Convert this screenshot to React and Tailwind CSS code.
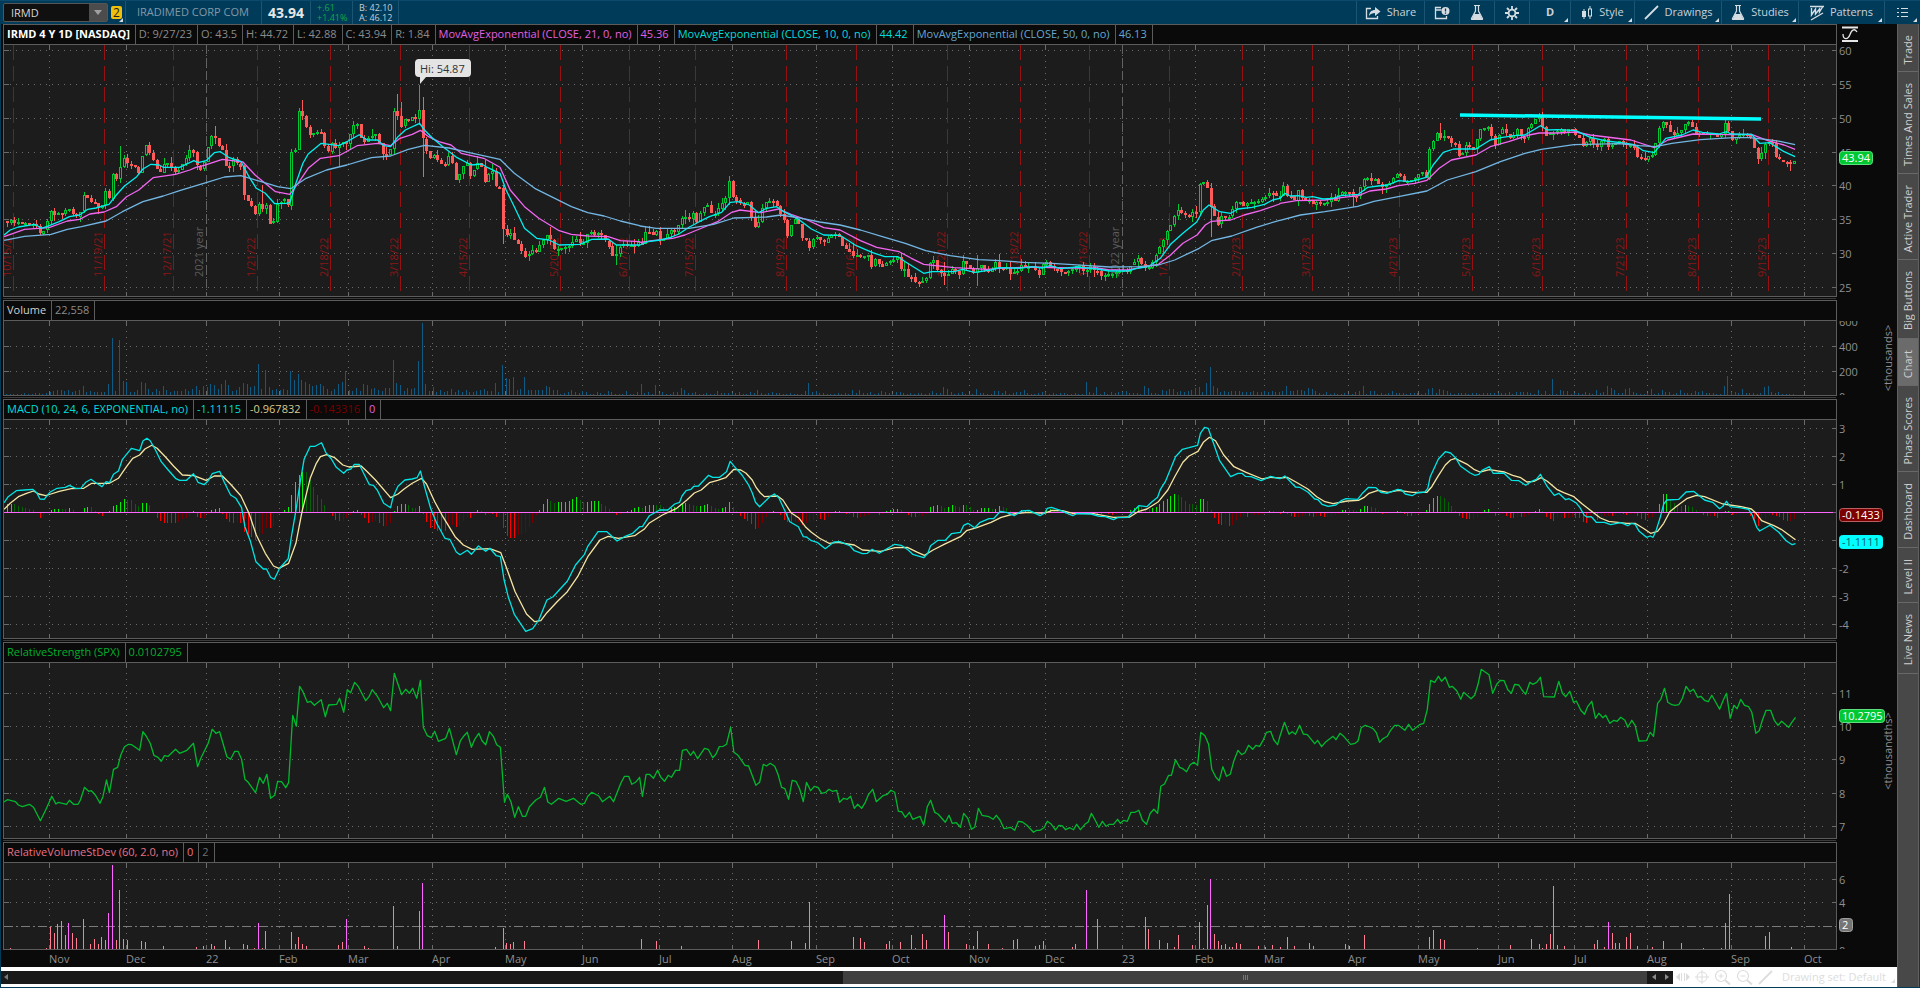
import React from "react";

/* ---------- data helpers ---------- */

// Samples are "x,y" pairs on a fine grid (2.45 units per px across, 3 per px down),
// relative to the origin of their segment.
const trace = (originX, originY, samples) =>
  samples
    .trim()
    .split(/\s+/)
    .map((pair) => {
      const [a, b] = pair.split(",").map(Number);
      return [originX + a / 2.45, originY + b / 3];
    });

const pathOf = (points) => "M" + points.map(([x, y]) => `${x.toFixed(1)} ${y.toFixed(1)}`).join("L");

const valueAt = (points, x) => {
  for (let i = 1; i < points.length; i++) {
    if (points[i][0] >= x) {
      const [x0, y0] = points[i - 1];
      const [x1, y1] = points[i];
      return x1 === x0 ? y1 : y0 + ((y1 - y0) * (x - x0)) / (x1 - x0);
    }
  }
  return points[points.length - 1][1];
};

const noise = (i, salt) => {
  const v = Math.sin(i * 127.1 + salt * 311.7) * 43758.5453;
  return v - Math.floor(v);
};

const STEP = 3.647;
const BAR_COUNT = 491;
const barX = (i) => Math.round(7 + i * STEP);

/* ---------- price ---------- */

const closes = [
  ...trace(0, 0, `18,664 40,664 65,668 85,668 100,700 112,675 122,635 140,645 158,635 175,630 190,660 205,590 222,600 235,615 246,635 258,570 268,605 276,525 287,545 294,500 304,480 315,500 325,485 335,520 347,490 350,430 360,440 368,465 378,495 392,520 402,490 412,490 426,515 440,510 455,475 465,450 475,460 484,510 492,510 500,480 508,450 518,410 524,405 532,435 545,445 556,510 565,485 575,480 590,500 598,585 610,600 628,655 634,610 645,625 655,605 663,680 672,665 680,605 700,600 706,615 714,425 724,450 732,335 742,345 752,385 762,405 773,405 785,390 795,440 805,455 815,430 825,450 832,430 848,430 850,385 860,400 867,360 877,380 887,420 895,430 905,410 915,400 930,430 940,475 948,460 957,445 965,335 975,355 985,385 993,355 1003,370 1012,350 1020,370 1029,310 1037,430 1046,460 1056,480 1063,465 1073,490 1083,495 1092,490 1100,465 1110,490 1117,545 1126,520 1136,495 1144,490 1153,530 1163,500 1172,485 1180,500 1190,550 1198,510 1208,520 1216,560 1225,560 1234,720 1242,710 1252,700 1262,735 1270,730 1280,760 1288,775 1298,760 1308,750 1316,750 1325,730 1335,710 1342,705 1352,735 1360,755 1370,745 1385,745 1395,735 1410,718 1420,725 1432,730 1440,700 1460,705 1470,700 1480,720 1490,735 1500,775 1510,765 1520,735 1540,735 1555,740 1566,720`),
  ...trace(640, 0, `5,730 14,690 25,705 40,695 50,720 60,715 75,695 88,690 103,650 112,650 122,660 130,640 139,665 148,635 157,620 165,615 175,640 185,635 193,615 203,605 211,590 220,535 229,595 240,605 250,615 263,610 273,650 282,685 291,660 300,615 309,600 318,600 327,600 335,620 345,655 353,665 362,715 372,670 382,660 390,680 398,720 407,725 415,740 425,710 435,710 445,735 455,730 465,700 475,700 485,705 495,740 510,745 523,775 533,765 545,775 560,765 568,815 578,765 588,800 600,790 615,780 630,775 638,800 648,810 658,830 668,840 680,845 690,845 700,830 710,795 718,785 727,810 740,820 748,840 757,815 765,810 775,820 783,830 790,785 800,795 810,805 818,820 827,800 836,800 850,815 860,810 870,785 880,800 890,800 905,815 920,815 930,795 945,800 955,790 965,815 980,820 990,790 997,785 1010,805 1025,812 1045,815 1065,800 1078,800 1090,818 1105,800 1120,815 1130,825 1145,820 1160,825 1175,812 1195,815 1205,790 1220,780 1233,800 1248,805 1258,765 1267,770 1275,715 1284,715 1293,680 1301,670 1310,635 1319,635 1328,650 1337,652 1346,655 1355,630 1364,635 1373,540 1381,545 1390,570 1400,620 1408,655 1418,670 1427,640 1437,660 1446,640 1454,615 1463,595 1472,605 1480,630 1488,610 1498,612 1507,610 1516,605 1525,600 1533,580 1543,580 1552,575 1560,595`),
  ...trace(1280, 0, `0,590 10,550 18,595 28,590 38,600 45,570 55,595 63,600 73,600 82,615 91,595 100,610 110,612 118,600 127,590 137,600 146,570 155,570 170,575 180,590 192,580 200,535 210,530 217,525 225,545 235,540 245,570 254,555 263,555 272,540 282,525 293,525 302,545 315,550 325,540 335,525 345,520 358,530 360,500 367,430 376,425 386,400 395,420 404,410 413,410 422,430 432,440 441,470 450,445 458,435 468,450 477,440 486,395 495,390 505,385 513,375 522,440 532,420 540,395 550,385 558,410 567,425 575,390 585,395 594,425 603,405 611,365 620,365 628,355 637,340 645,400 655,405 665,405 675,405 683,370 692,390 700,400 712,375 720,405 730,415 737,430 745,440 755,405 765,425 772,445 782,435 790,410 800,430 810,440 820,425 832,420 840,430 852,440 862,430 870,440 878,490 887,475 897,480 905,455 915,480 922,395 932,380 940,360 950,385 960,400 968,405 978,400 987,385 996,360 1005,370 1013,395 1023,400 1033,390 1040,410 1050,400 1058,400 1068,415 1076,415 1085,385 1093,355 1102,430 1110,415 1120,405 1130,395 1140,410 1150,410 1158,420 1165,485 1173,470 1182,455 1190,430 1200,420 1208,440 1217,475 1227,475 1237,485 1245,495 1254,490 1262,478`),
];

// Bars whose range stands out: [x, high, low] in px.
const wideRanges = [
  [302, 100, 112], [420, 85, 125], [423, 97, 177], [398, 94, 120], [402, 102, 128],
  [339, 142, 167], [214, 126, 138], [262, 185, 212], [120, 146, 166], [1211, 183, 237],
  [1179, 204, 220], [999, 254, 268], [977, 255, 286], [1354, 190, 207], [1440, 123, 140],
  [730, 176, 205], [503, 198, 244], [549, 227, 245], [616, 245, 265], [944, 262, 285],
  [1791, 160, 171],
];

const ema10 = [
  ...trace(0, 0, `10,705 25,690 45,681 85,673 102,685 122,676 145,665 170,650 195,645 215,628 235,624 267,613 285,585 305,558 335,530 350,507 370,493 390,495 400,502 440,502 475,482 485,488 505,482 525,458 540,455 560,472 590,484 610,530 628,565 650,580 673,611 700,610 710,608 725,550 742,490 755,462 787,430 830,437 850,425 880,404 900,420 925,420 940,437 957,440 975,410 993,390 1028,370 1040,390 1060,415 1085,440 1120,473 1155,495 1180,492 1195,503 1225,520 1240,570 1260,620 1285,685 1315,715 1345,720 1370,735 1420,733 1450,718 1490,717 1510,735 1567,735`),
  ...trace(640, 0, `0,735 20,725 50,720 75,712 95,702 120,682 145,665 170,650 200,637 221,607 240,605 268,615 290,638 310,625 335,620 352,635 385,655 420,687 450,705 490,706 530,737 570,758 600,770 632,770 650,785 695,820 715,815 770,815 790,808 820,817 860,810 880,803 930,805 960,800 985,804 1005,797 1030,806 1070,801 1120,807 1150,813 1195,813 1215,806 1245,800 1275,775 1300,733 1330,700 1364,666 1380,630 1394,615 1420,635 1447,640 1465,627 1500,622 1530,613 1550,600 1567,595`),
  ...trace(1280, 0, `0,595 12,580 25,588 45,587 65,592 80,590 105,597 130,595 150,587 192,583 215,562 240,558 265,555 290,542 320,545 358,532 375,495 400,457 425,447 480,447 515,420 545,412 575,407 600,405 638,377 655,390 680,389 725,392 760,412 800,423 850,430 870,435 890,452 917,458 945,415 985,405 1012,390 1035,397 1075,402 1094,395 1105,402 1155,403 1175,430 1200,428 1235,455 1262,470`),
];

const ema21 = [
  ...trace(0, 0, `10,710 60,688 120,683 165,663 195,658 220,642 255,636 285,620 310,590 340,570 375,533 430,523 465,510 480,502 500,496 545,478 595,486 625,525 655,555 675,575 710,583 730,550 755,505 785,475 830,467 875,437 925,430 957,437 980,415 1010,403 1030,391 1050,410 1075,425 1105,435 1130,460 1185,475 1225,502 1250,570 1285,620 1320,655 1370,692 1400,703 1440,708 1490,710 1520,722 1567,725`),
  ...trace(640, 0, `0,727 30,722 80,715 110,705 140,690 190,665 225,637 245,630 295,638 340,627 370,643 410,660 450,683 490,690 540,722 580,742 635,755 665,775 695,793 770,803 850,808 880,805 960,801 1050,804 1120,804 1150,810 1195,810 1225,803 1270,793 1300,765 1330,730 1365,705 1385,675 1400,664 1447,660 1480,645 1520,632 1567,612`),
  ...trace(1280, 0, `0,610 40,602 110,600 155,592 192,587 220,573 260,567 290,557 330,550 360,541 390,505 420,480 480,465 515,440 560,425 610,405 635,399 680,399 725,396 760,405 860,420 917,443 950,420 1012,402 1090,404 1155,403 1195,422 1235,435 1262,448`),
];

const ema50 = [
  ...trace(0, 0, `10,721 60,709 125,703 165,688 200,680 260,663 300,635 350,605 400,588 440,572 505,548 550,531 590,527 640,545 680,560 712,566 750,535 800,510 850,495 910,473 957,468 1000,448 1040,436 1100,444 1150,458 1225,478 1260,520 1310,565 1400,620 1440,638 1480,648 1520,663 1567,677`),
  ...trace(640, 0, `0,678 40,685 120,685 180,673 230,654 310,651 345,645 400,656 440,666 490,675 540,690 600,712 650,730 700,752 760,767 830,779 880,782 940,787 1010,790 1100,797 1150,801 1220,800 1270,795 1310,780 1370,745 1400,722 1450,708 1510,682 1567,661`),
  ...trace(1280, 0, `0,661 50,645 110,635 190,619 230,604 290,590 360,573 410,540 480,515 540,485 600,460 640,448 720,434 830,431 880,437 920,440 960,430 1030,419 1110,413 1150,413 1195,419 1225,424 1262,434`),
];

/* ---------- MACD ---------- */

const macd = [
  ...trace(0, 290, `10,638 20,620 40,602 60,600 80,598 90,608 98,627 108,628 122,607 140,595 160,592 170,586 185,595 198,595 210,577 223,568 235,578 250,590 260,575 268,578 278,553 290,543 300,508 322,475 342,482 350,453 360,445 368,452 380,478 395,515 412,540 430,565 440,571 457,571 474,551 485,577 500,584 510,572 520,551 538,544 550,578 565,615 578,625 592,653 600,710 613,752 627,815 645,837 653,837 663,862 672,868 685,835 706,806 714,740 725,662 735,580 745,508 760,469 772,469 788,458 798,487 812,507 824,532 842,550 850,540 860,537 868,523 880,523 893,555 905,584 915,586 925,602 940,640 957,653 963,620 975,589 992,570 1010,567 1022,563 1030,543 1040,590 1055,655 1070,700 1090,745 1102,748 1118,786 1127,794 1145,781 1155,793 1172,768 1190,784 1200,775 1216,797 1226,800 1235,870 1245,920 1260,973 1275,1000 1288,1024 1305,1016 1320,990 1340,930 1355,920 1370,900 1390,874 1410,825 1432,793 1440,769 1465,725 1487,725 1512,753 1530,740 1550,730 1567,710`),
  ...trace(640, 290, `6,710 23,677 48,660 68,660 85,642 97,637 103,618 113,602 125,598 132,589 143,588 168,556 178,562 195,562 212,545 221,514 235,535 250,555 265,583 275,608 283,637 293,650 318,620 329,612 340,623 352,655 367,695 388,710 400,740 408,741 420,752 434,757 454,776 475,756 490,755 515,768 525,782 545,791 557,790 569,778 586,790 605,776 624,763 640,766 657,780 668,793 695,803 705,790 712,767 730,751 748,751 763,731 785,727 793,706 803,700 820,713 832,698 855,686 866,686 883,664 900,668 917,677 935,663 953,661 980,677 992,668 998,655 1008,652 1030,661 1060,677 1070,671 1105,672 1125,679 1140,680 1160,689 1170,683 1195,682 1208,665 1222,647 1242,650 1253,637 1268,622 1275,598 1287,575 1312,500 1329,478 1345,473 1366,466 1373,430 1383,412 1392,415 1405,460 1420,512 1447,560 1465,550 1475,550 1483,559 1497,560 1522,572 1545,559 1567,566`),
  ...trace(1280, 300, `0,536 12,528 38,561 48,562 68,576 85,597 93,599 103,613 118,619 137,615 150,602 162,596 190,598 203,578 217,562 235,563 247,577 262,580 288,568 298,570 307,582 324,587 335,579 355,576 362,565 368,530 388,477 405,455 418,459 430,473 442,498 465,518 477,526 487,523 495,511 513,500 522,520 548,519 567,541 585,542 602,556 615,545 628,538 638,523 655,560 672,586 683,580 700,599 708,596 725,608 735,623 745,645 752,651 763,650 775,667 795,667 810,674 835,668 852,677 862,670 870,673 880,694 898,712 907,708 914,712 922,690 932,650 940,612 948,600 977,598 995,576 1013,574 1025,585 1040,600 1060,607 1077,626 1085,619 1094,604 1103,620 1125,623 1148,628 1157,645 1168,682 1175,693 1200,676 1222,697 1240,722 1255,734 1263,731`),
];

const signal = [
  ...trace(0, 290, `10,658 25,640 45,620 65,610 82,603 95,612 112,617 125,612 145,604 175,596 205,595 225,580 268,580 290,565 310,530 325,505 342,495 355,477 372,466 385,475 405,500 425,528 447,555 475,557 505,571 525,558 545,558 565,583 590,617 610,670 628,735 650,790 670,828 683,835 707,820 725,760 740,665 760,565 775,520 785,500 800,494 820,503 840,525 855,531 885,528 900,545 920,570 957,623 975,612 990,597 1010,580 1033,565 1045,582 1065,635 1085,680 1115,740 1135,765 1157,778 1200,776 1227,788 1240,830 1262,905 1290,972 1310,995 1325,992 1340,968 1365,935 1390,905 1415,860 1440,800 1470,750 1490,739 1515,745 1555,737 1567,727`),
  ...trace(640, 290, `10,718 22,700 55,675 90,655 115,630 133,609 150,600 170,578 190,571 210,563 230,538 247,540 260,550 275,570 285,593 295,609 305,620 337,618 350,630 370,668 390,685 405,710 420,727 440,745 463,760 485,757 525,765 545,780 590,784 625,773 655,772 680,787 697,796 718,780 745,763 785,740 800,722 825,713 860,697 885,682 915,672 950,667 990,670 1010,661 1035,662 1060,670 1110,671 1160,682 1200,681 1222,664 1242,657 1270,635 1293,600 1310,560 1330,517 1345,498 1367,484 1380,457 1395,442 1410,452 1430,495 1455,530 1485,547 1525,567 1545,562 1567,564`),
  ...trace(1280, 300, `0,534 18,532 40,547 68,567 90,590 110,605 130,611 165,603 192,601 205,593 218,580 240,571 265,577 290,571 325,577 360,577 372,560 388,527 405,495 418,480 430,475 440,482 460,494 475,508 490,516 513,509 550,516 570,526 590,533 605,546 622,544 640,533 655,544 678,568 695,578 720,590 740,611 765,635 785,654 805,664 850,670 870,670 890,685 908,700 925,694 940,670 955,635 970,620 998,595 1020,586 1040,590 1085,612 1130,620 1155,627 1165,638 1180,662 1210,677 1228,688 1263,719`),
];

/* ---------- relative strength ---------- */

const strength = [
  ...trace(0, 640, `10,486 18,479 38,485 45,495 55,500 72,493 82,502 99,542 112,510 127,469 137,492 143,487 163,493 170,481 180,493 191,493 197,480 207,442 217,454 224,452 234,466 245,490 252,470 261,420 268,458 278,388 288,382 296,345 305,320 315,313 323,314 342,331 350,275 358,288 368,310 377,346 387,352 395,364 403,347 412,349 430,328 440,340 458,331 474,310 484,380 492,355 510,310 520,268 529,280 538,275 556,350 565,358 575,334 583,334 592,358 600,418 608,427 626,458 636,412 645,430 654,403 663,475 673,466 680,424 690,425 700,443 707,428 717,226 726,259 734,139 742,155 753,187 761,184 770,196 787,179 797,230 805,195 825,193 832,175 842,217 851,149 859,158 869,127 878,140 896,182 904,170 912,149 925,170 940,203 949,190 957,212 966,100 984,164 994,148 1003,160 1011,145 1021,175 1030,121 1037,262 1047,287 1057,293 1065,274 1074,304 1092,295 1101,265 1118,344 1128,302 1137,287 1145,277 1155,322 1163,298 1173,280 1181,302 1190,314 1199,275 1209,290 1217,314 1226,322 1236,487 1243,463 1252,486 1261,532 1270,500 1280,529 1288,529 1297,500 1313,480 1324,472 1334,442 1342,486 1351,493 1369,475 1387,484 1405,475 1423,493 1432,490 1440,469 1450,457 1467,468 1476,485 1494,469 1503,485 1521,430 1530,409 1540,409 1548,433 1557,427 1567,412`),
  ...trace(640, 640, `6,469 15,403 23,403 33,415 43,391 51,412 60,424 69,406 77,412 87,391 97,391 104,331 114,328 124,346 131,334 141,356 158,325 167,328 178,353 186,343 194,320 204,319 212,313 222,262 230,337 240,346 257,376 266,378 284,436 293,427 302,373 310,378 319,370 330,379 338,403 347,442 355,446 364,478 373,421 382,424 391,446 400,485 408,427 418,452 427,439 436,442 445,460 455,457 463,448 471,454 482,451 489,487 499,475 508,478 516,469 525,505 533,493 543,505 552,487 560,463 570,448 579,485 595,467 606,463 615,451 624,457 633,514 641,515 650,532 660,517 668,538 686,529 695,556 704,500 712,481 722,517 730,522 748,547 757,526 765,550 775,548 785,562 793,520 803,535 812,568 820,562 829,505 838,526 855,530 865,538 873,526 882,540 892,566 908,562 918,571 927,544 937,546 948,556 964,577 972,571 980,571 990,563 998,544 1008,553 1018,570 1026,556 1035,558 1043,569 1053,563 1062,569 1070,553 1079,569 1090,553 1098,546 1106,520 1115,540 1124,562 1133,544 1142,559 1150,553 1160,553 1170,538 1177,550 1185,541 1194,544 1203,517 1213,517 1222,511 1231,541 1241,553 1250,520 1259,508 1268,520 1276,439 1285,432 1295,406 1302,406 1312,359 1322,382 1330,386 1339,395 1348,374 1357,367 1366,376 1374,277 1384,287 1393,313 1401,388 1411,412 1419,422 1428,380 1437,409 1446,403 1455,362 1465,331 1474,344 1482,338 1491,316 1501,328 1509,316 1518,319 1526,302 1535,277 1545,274 1553,300 1562,314 1567,292`),
  ...trace(1280, 640, `11,247 22,283 30,275 38,283 48,256 57,282 67,284 85,311 92,301 102,320 111,307 130,289 137,299 147,280 156,289 173,313 184,310 191,303 199,263 209,256 220,261 228,266 236,278 244,307 252,296 263,289 271,271 281,256 290,256 306,271 315,253 325,271 342,254 352,250 361,208 369,121 379,127 388,109 396,124 405,112 415,142 422,139 433,152 443,178 450,157 468,176 477,166 485,133 493,88 512,104 521,160 531,133 540,121 549,122 558,149 567,160 575,133 585,135 593,150 602,163 612,127 619,133 629,127 638,112 646,170 672,171 683,124 692,160 700,170 710,154 719,187 726,183 737,211 746,223 754,199 764,184 773,235 781,220 791,233 798,226 808,250 818,241 826,244 835,232 845,241 852,262 862,241 870,256 879,303 898,302 907,277 915,289 925,190 933,178 942,145 950,187 960,194 968,196 977,194 986,175 995,139 1004,155 1013,148 1023,172 1031,169 1040,181 1049,185 1058,166 1077,208 1086,180 1094,160 1103,235 1112,196 1120,206 1129,178 1138,196 1148,200 1156,217 1166,280 1174,272 1182,240 1191,211 1202,211 1211,241 1220,256 1229,244 1246,262 1254,247 1263,232`),
];

/* ---------- volume ---------- */

const volumeSpikes = [
  ...trace(0, 290, `204,288 266,282 275,144 293,150 302,273 312,277 347,276 356,279 400,288 482,288 499,288 518,282 525,285 552,270 562,285 597,279 606,282 624,288 633,222 650,240 714,243 724,270 732,252 742,270 751,276 761,282 775,284 796,288 830,282 838,276 849,243 893,282 903,285 964,210 974,278 982,285 1028,213 1035,98 1045,282 1214,279 1234,225 1241,265 1250,267 1258,261 1285,261 1338,288`),
  ...trace(640, 290, `3,282 40,285 101,294 111,300 290,300 415,279 405,303 523,300 540,300 746,291 756,297 827,297 1094,276 1121,291 1239,288 1246,294 1371,291 1390,279 1398,231 1408,288 1417,293`),
  ...trace(1280, 300, `18,258 72,264 81,267 207,258 366,267 376,264 393,267 403,270 670,237 778,270 805,258 814,264 823,270 849,267 858,264 939,270 983,270 1091,258 1101,228 1190,261 1199,258`),
];

const usualVolume = (x) => {
  if (x < 48) return [1, 2];
  if (x < 200) return [3, 5];
  if (x < 430) return [4, 9];
  if (x < 510) return [3, 6];
  if (x < 560) return [5, 4];
  if (x < 1160) return [1, 4];
  if (x < 1320) return [3, 4];
  return [1, 5];
};

const volumeBars = Array.from({ length: BAR_COUNT }, (_, i) => {
  const x = barX(i);
  const spike = volumeSpikes.find(([sx]) => Math.abs(sx - x) < 1.9);
  const [low, spread] = usualVolume(x);
  return [x, spike ? Math.round(395 - spike[1]) : Math.round(low + spread * noise(i, 4) * noise(i, 9))];
});

const relativeVolume = [
  ...trace(0, 640, `25,924 114,924 123,862 133,880 141,852 150,843 160,885 168,849 178,880 187,894 204,837 222,912 231,897 241,912 249,891 258,900 266,819 275,675 285,900 293,750 302,897 312,900 347,903 356,906 400,918 482,921 499,918 518,912 525,918 552,900 562,921 597,912 606,915 624,924 633,849 642,924 650,873 714,877 724,912 732,891 741,912 751,918 829,915 838,906 849,837 893,918 903,924 964,798 974,918 1028,813 1035,729 1214,921 1233,864 1241,909 1250,912 1258,906 1285,903`),
  ...trace(640, 640, `3,897 40,903 101,918 290,900 371,903 405,909 415,786 523,891 540,894 550,906 604,912 611,903 638,906 665,885 675,924 692,882 702,900 746,825 756,876 800,912 817,918 827,873 854,912 888,924 915,900 925,897 969,918 979,915 988,903 1059,921 1067,912 1094,750 1121,837 1238,831 1246,867 1273,900 1292,909 1310,921 1319,885 1354,915 1371,846 1380,924 1390,795 1398,717 1408,882 1417,903 1425,915 1434,912 1444,921 1452,921 1461,909 1471,912 1516,918 1532,921 1550,915`),
  ...trace(1280, 640, `0,921 18,891 36,918 72,909 81,918 160,912 170,918 207,885 366,891 376,870 393,897 403,900 484,924 564,915 616,897 636,912 643,924 653,912 663,882 670,738 680,915 697,918 770,912 778,900 795,921 805,846 814,880 822,909 832,909 849,891 858,880 876,918 913,921 939,903 983,909 1037,924 1081,924 1091,849 1101,762 1190,888 1199,876 1253,921`),
];

/* ---------- calendar ---------- */

const months = [
  [49, "Nov"], [126, "Dec"], [206, "22"], [279, "Feb"], [348, "Mar"], [432, "Apr"], [505, "May"], [582, "Jun"],
  [659, "Jul"], [732, "Aug"], [816, "Sep"], [892, "Oct"], [969, "Nov"], [1045, "Dec"], [1122, "23"], [1195, "Feb"],
  [1264, "Mar"], [1348, "Apr"], [1418, "May"], [1498, "Jun"], [1574, "Jul"], [1647, "Aug"], [1731, "Sep"], [1804, "Oct"],
];

const expirations = [
  [13, "10/15/21"], [104, "11/19/21"], [173, "12/17/21"], [257, "1/21/22"], [330, "2/18/22"], [400, "3/18/22"],
  [469, "4/15/22"], [560, "5/20/22"], [629, "6/17/22"], [695, "7/15/22"], [786, "8/19/22"], [856, "9/16/22"],
  [947, "10/21/22"], [1020, "11/18/22"], [1089, "12/16/22"], [1169, "1/20/23"], [1242, "2/17/23"], [1312, "3/17/23"],
  [1399, "4/21/23"], [1472, "5/19/23"], [1542, "6/16/23"], [1626, "7/21/23"], [1698, "8/18/23"], [1768, "9/15/23"],
];

const years = [[206, "2021 year"], [1122, "2022 year"]];

/* ---------- plot building blocks ---------- */

function Plot({ top, height, rows, heightClass, label, children }) {
  const bottom = top + height;
  return (
    <svg
      role="img"
      aria-label={label}
      viewBox={`4 ${top} 1832 ${height}`}
      preserveAspectRatio="none"
      className={`block w-full bg-[#1c1c1c] ${heightClass}`}
    >
      <g stroke="#6a6a6a" shapeRendering="crispEdges">
        {rows.map((y) => (
          <g key={y}>
            <line x1="10" x2="1825" y1={y + 0.5} y2={y + 0.5} strokeDasharray="1 5" />
            <line x1="4" x2="9" y1={y + 0.5} y2={y + 0.5} />
            <line x1="1832" x2="1836" y1={y + 0.5} y2={y + 0.5} />
          </g>
        ))}
        {months.map(([x]) => (
          <g key={x}>
            <line x1={x + 0.5} x2={x + 0.5} y1={top + 10} y2={bottom - 6} strokeDasharray="1 5" />
            <line x1={x + 0.5} x2={x + 0.5} y1={top} y2={top + 5} />
            <line x1={x + 0.5} x2={x + 0.5} y1={bottom - 4} y2={bottom} />
          </g>
        ))}
      </g>
      {children}
    </svg>
  );
}

function Curve({ points, color }) {
  return <path d={pathOf(points)} fill="none" stroke={color} strokeWidth="1.3" strokeLinejoin="round" />;
}

function Candles() {
  const bars = [];
  let open = valueAt(closes, barX(0));
  for (let i = 0; i < BAR_COUNT; i++) {
    const x = barX(i);
    const close = valueAt(closes, x) + (noise(i, 1) - 0.5) * 4;
    const up = close < open;
    const top = Math.round(Math.min(open, close));
    const size = Math.max(2, Math.round(Math.abs(open - close)));
    let high = top - Math.round(noise(i, 2) * noise(i, 5) * 8);
    let low = top + size + Math.round(noise(i, 3) * noise(i, 6) * 8);
    const wide = wideRanges.find(([wx]) => Math.abs(wx - x) < 1.9);
    if (wide) {
      high = Math.min(high, wide[1]);
      low = Math.max(low, wide[2]);
    }
    bars.push({ x, top, size, high, low, up });
    open = close;
  }
  return (
    <g shapeRendering="crispEdges">
      {bars.map(({ x, top, size, high, low, up }) =>
        up ? (
          <g key={x}>
            <rect x={x} y={high} width="1" height={low - high} fill="#00c832" />
            <rect x={x - 1} y={top} width="3" height={size} fill="#00c832" />
            {size > 2 && <rect x={x} y={top + 1} width="1" height={size - 2} fill="#1c1c1c" />}
          </g>
        ) : (
          <g key={x}>
            <rect x={x} y={high} width="1" height={low - high} fill="#ff5a5a" />
            <rect x={x - 1} y={top} width="3" height={size} fill="#ff5a5a" />
          </g>
        )
      )}
    </g>
  );
}

function PricePlot() {
  return (
    <Plot top={45} height={251} heightClass="h-[251px]" label="Price" rows={[50, 84, 118, 152, 185, 219, 253, 287]}>
      <g className="font-['Open_Sans',sans-serif] text-[11px]" fill="#8a1616">
        {expirations.map(([x, text]) => (
          <text key={x} transform={`translate(${x - 2} 277) rotate(-90)`}>{text}</text>
        ))}
      </g>
      <g className="font-['Open_Sans',sans-serif] text-[11px]" fill="#5c5c5c">
        {years.map(([x, text]) => (
          <text key={x} transform={`translate(${x - 3} 277) rotate(-90)`}>{text}</text>
        ))}
      </g>
      <g shapeRendering="crispEdges">
        {expirations.map(([x]) => (
          <line key={x} x1={x + 0.5} x2={x + 0.5} y1="45" y2="293" stroke="#961212" strokeDasharray="15 6" />
        ))}
        {years.map(([x]) => (
          <line key={x} x1={x + 0.5} x2={x + 0.5} y1="45" y2="293" stroke="#626262" strokeDasharray="9 4" />
        ))}
      </g>
      <Candles />
      <Curve points={ema21} color="#f266f2" />
      <Curve points={ema10} color="#00f0f0" />
      <Curve points={ema50} color="#72b6e4" />
      <line x1="1460" y1="115" x2="1761" y2="119" stroke="#00ffff" strokeWidth="3.500" />
      <path d="M419 59h48a4 4 0 0 1 4 4v10a4 4 0 0 1-4 4h-41l-6 7 0-7h-1a4 4 0 0 1-4-4V63a4 4 0 0 1 4-4z" fill="#e4e4e4" />
      <text x="420" y="73" fill="#333333" className="font-['Open_Sans',sans-serif] text-[11px]">Hi: 54.87</text>
    </Plot>
  );
}

function VolumePlot() {
  return (
    <Plot top={321} height={74} heightClass="h-[74px]" label="Volume" rows={[346, 371]}>
      <g fill="#0d5a84" shapeRendering="crispEdges">
        {volumeBars.map(([x, h]) => (
          <rect key={x} x={x - 1} y={395 - h} width="1" height={h} />
        ))}
      </g>
    </Plot>
  );
}

function MacdPlot() {
  const bars = [];
  let previous = 0;
  for (let i = 0; i < BAR_COUNT; i++) {
    const x = barX(i);
    const diff = valueAt(signal, x) - valueAt(macd, x);
    let color;
    if (diff >= 0) color = diff >= previous ? "#00f000" : "#006400";
    else color = diff <= previous ? "#ff0000" : "#780000";
    bars.push([x, Math.round(diff), color]);
    previous = diff;
  }
  return (
    <Plot top={420} height={218} heightClass="h-[218px]" label="MACD" rows={[428, 456, 484, 512, 540, 568, 596, 624]}>
      <g shapeRendering="crispEdges">
        {bars.map(([x, h, color]) => (
          <rect key={x} x={x} y={h > 0 ? 512 - h : 513} width="1" height={Math.abs(h)} fill={color} />
        ))}
        <rect x="4" y="512" width="1829" height="1" fill="#ff66ff" />
      </g>
      <Curve points={signal} color="#f5e6a3" />
      <Curve points={macd} color="#00e5e5" />
    </Plot>
  );
}

function StrengthPlot() {
  return (
    <Plot top={663} height={175} heightClass="h-[175px]" label="Relative strength" rows={[693, 726, 759, 793, 826]}>
      <Curve points={strength} color="#00b92e" />
    </Plot>
  );
}

function RelativeVolumePlot() {
  return (
    <Plot top={863} height={86} heightClass="h-[86px]" label="Relative volume" rows={[879, 902]}>
      <g shapeRendering="crispEdges">
        <line x1="4" x2="1836" y1="926.5" y2="926.5" stroke="#7a7a7a" strokeDasharray="9 3 2 3" />
        {relativeVolume.map(([x, y]) => (
          <rect key={x} x={Math.round(x - 0.5)} y={Math.round(y)} width="1" height={949 - Math.round(y)} fill={y < 926 ? "#ff66ff" : "#ff7f93"} />
        ))}
      </g>
    </Plot>
  );
}

/* ---------- value axes ---------- */

function Axis({ top, height, sizeClass, labels, clip, unit, badges = [], children }) {
  const clipId = `axis-${top}`;
  return (
    <svg viewBox={`1837 ${top} 60 ${height}`} className={`block w-[60px] shrink-0 ${sizeClass}`} aria-label="Value axis">
      <defs>
        <clipPath id={clipId}>
          <rect x="1837" y={clip[0]} width="60" height={clip[1] - clip[0]} />
        </clipPath>
      </defs>
      <g clipPath={`url(#${clipId})`} fill="#8f8f8f" className="font-['Open_Sans',sans-serif] text-[11px]">
        {labels.map(([y, text]) => (
          <text key={text} x="1839" y={y + 5}>{text}</text>
        ))}
      </g>
      {unit && (
        <text
          transform={`translate(1892 ${unit[0]}) rotate(-90)`}
          textAnchor="middle"
          fill="#8f8f8f"
          className="font-['Open_Sans',sans-serif] text-[11px]"
        >
          {unit[1]}
        </text>
      )}
      {badges.map(({ y, width, text, fill, edge, ink }) => (
        <g key={text}>
          <rect x="1839.5" y={y + 0.5} width={width} height="13" rx="3" fill={fill} stroke={edge} />
          <text x="1842" y={y + 11} fill={ink} className="font-['Open_Sans',sans-serif] text-[11px]">{text}</text>
        </g>
      ))}
      {children}
    </svg>
  );
}

/* ---------- panel ---------- */

function Panel({ cells, axis, children }) {
  return (
    <section className="flex">
      <div className="min-w-0 flex-1 border border-[#5c5c5c] bg-[#0a0a0a]">
        <div className="flex h-5 border-b border-[#5c5c5c] text-[11px] leading-[17px]">
          {cells.map(([text, style], i) => (
            <span key={i} className={`whitespace-nowrap border-r border-[#5c5c5c] pl-[3px] pr-[5px] ${style}`}>{text}</span>
          ))}
        </div>
        {children}
      </div>
      {axis}
    </section>
  );
}

function Splitter() {
  return (
    <div className="flex h-[3px] items-center pr-[61px]">
      <div className="h-px flex-1 bg-[#3a3a3a]" />
    </div>
  );
}

/* ---------- icons ---------- */

const ShareIcon = () => (
  <svg width="16" height="14" viewBox="0 0 16 14" fill="none" aria-hidden="true">
    <path d="M6 2.5H1.5v10h11V10" stroke="#d6dde2" strokeWidth="1.3" />
    <path d="M4 10c.3-4 2.6-6 6-6V1l5.500 4.500L10 10V7C7.500 7 5.500 7.800 4 10z" fill="#d6dde2" />
  </svg>
);

const AlertWindowIcon = () => (
  <svg width="16" height="14" viewBox="0 0 16 14" fill="none" aria-hidden="true">
    <path d="M7 1.500H1.500v11h11V10M1.500 4h6" stroke="#d6dde2" strokeWidth="1.3" />
    <circle cx="11.500" cy="5" r="4" fill="#d6dde2" />
    <path d="M11.500 2.500v3M11.500 6.500v1.200" stroke="#003b5a" strokeWidth="1.3" />
  </svg>
);

const FlaskIcon = () => (
  <svg width="14" height="17" viewBox="0 0 14 17" fill="none" aria-hidden="true">
    <path d="M4 1.500h6M5.500 2v5L1.500 14.500Q1.200 15.500 2.200 15.500h9.600Q12.800 15.500 12.500 14.500L8.500 7V2" stroke="#d6dde2" strokeWidth="1.2" />
    <path d="M4.200 10h5.600l2.700 5.500h-11z" fill="#d6dde2" />
  </svg>
);

const GearIcon = () => (
  <svg width="14" height="14" viewBox="-7 -7 14 14" fill="none" stroke="#d6dde2" aria-hidden="true">
    <circle r="3.400" strokeWidth="1.800" />
    <path d="M0-4v-3M0 4v3M-4 0h-3M4 0h3M-3-3l-2-2M3 3l2 2M-3 3l-2 2M3-3l2-2" strokeWidth="1.800" />
  </svg>
);

const CandleIcon = () => (
  <svg width="12" height="14" viewBox="0 0 12 14" fill="none" stroke="#d6dde2" aria-hidden="true">
    <path d="M3 3v10M9 0v3M9 10v3" />
    <rect x="1.500" y="5.500" width="3" height="5" fill="#d6dde2" />
    <rect x="7.500" y="3" width="3" height="7" />
  </svg>
);

const SlashIcon = ({ color = "#d6dde2" }) => (
  <svg width="15" height="15" viewBox="0 0 15 15" aria-hidden="true">
    <path d="M1 14L14 1" stroke={color} strokeWidth="1.800" />
  </svg>
);

const PatternIcon = () => (
  <svg width="14" height="16" viewBox="0 0 14 16" fill="none" stroke="#d6dde2" aria-hidden="true">
    <path d="M0 1.500h14M1.500 3v7l4-6v5l4-5v3l3-5M1 15L13 8" strokeWidth="1.400" />
  </svg>
);

const ListIcon = () => (
  <svg width="11" height="11" viewBox="0 0 11 11" stroke="#d6dde2" shapeRendering="crispEdges" aria-hidden="true">
    <path d="M0 1.500h2M4 1.500h7M0 5.500h2M4 5.500h7M0 9.500h2M4 9.500h7" />
  </svg>
);

const ZoomIcon = ({ plus }) => (
  <svg width="17" height="16" viewBox="0 0 17 16" fill="none" stroke="#dddddd" aria-hidden="true">
    <circle cx="7" cy="7" r="5.500" strokeWidth="1.200" />
    <path d={plus ? "M4.500 7h5M7 4.500v5" : "M4.500 7h5"} />
    <path d="M11 11l5 4.500" strokeWidth="2" />
  </svg>
);

const CrosshairIcon = () => (
  <svg width="14" height="14" viewBox="0 0 14 14" fill="none" stroke="#dddddd" aria-hidden="true">
    <circle cx="7" cy="7" r="5" />
    <path d="M7 0v14M0 7h14" />
  </svg>
);

const ExpandIcon = () => (
  <svg width="14" height="10" viewBox="0 0 14 10" aria-hidden="true">
    <path d="M0 5l4-4v8zM14 5l-4-4v8z" fill="#dddddd" />
    <path d="M5.500 1v8M8.500 1v8" stroke="#dddddd" />
  </svg>
);

const Corner = ({ color = "#d6dde2" }) => (
  <svg width="4" height="4" viewBox="0 0 4 4" className="absolute bottom-[2px] right-[2px]" aria-hidden="true">
    <path d="M4 0v4H0z" fill={color} />
  </svg>
);

/* ---------- toolbar ---------- */

const tools = [
  { name: "Share", text: "Share", Icon: ShareIcon, width: "w-[68px]" },
  { name: "Alert window", Icon: AlertWindowIcon, width: "w-[35px]" },
  { name: "Flask", Icon: FlaskIcon, width: "w-[35px]" },
  { name: "Settings", Icon: GearIcon, width: "w-[35px]" },
  { name: "Timeframe", text: "D", bold: true, corner: true, width: "w-[41px]" },
  { name: "Style", text: "Style", Icon: CandleIcon, corner: true, width: "w-[64px]" },
  { name: "Drawings", text: "Drawings", Icon: SlashIcon, corner: true, width: "w-[87px]" },
  { name: "Studies", text: "Studies", Icon: FlaskIcon, corner: true, width: "w-[77px]" },
  { name: "Patterns", text: "Patterns", Icon: PatternIcon, corner: true, width: "w-[86px]" },
  { name: "Menu", Icon: ListIcon, corner: true, width: "w-[35px]" },
];

function Toolbar() {
  return (
    <header className="flex h-6 items-stretch border-t border-[#0b4a6c] bg-[#003b5a] pl-[3px] text-[11px]">
      <div className="my-[2px] flex w-[105px] items-center rounded-xs border border-[#555555] bg-[#101010]">
        <input aria-label="Symbol" defaultValue="IRMD" className="h-full w-0 flex-1 bg-transparent pl-[7px] text-[11px] text-[#d6d6d6] outline-none" />
        <button type="button" aria-label="Choose symbol" className="flex h-full w-[18px] items-center justify-center bg-[#4c4c4c]">
          <svg width="8" height="5" viewBox="0 0 8 5" aria-hidden="true"><path d="M0 0h8L4 5z" fill="#a0a0a0" /></svg>
        </button>
      </div>
      <button type="button" aria-label="Symbol link" className="relative flex w-[18px] items-center justify-center border-r border-[#1c5474]">
        <span className="mb-[1px] rounded-xs bg-[#f0bf0a] px-[2px] text-[12px] leading-[13px] text-[#202020]">2</span>
        <Corner />
      </button>
      <span className="flex w-[136px] items-center whitespace-nowrap border-r border-[#1c5474] pl-[11px] text-[#8499a6]">IRADIMED CORP COM</span>
      <span className="flex w-[49px] items-center justify-center border-r border-[#1c5474] text-[14px] font-bold text-[#e6e6e6]">43.94</span>
      <span className="flex w-[42px] flex-col justify-center border-r border-[#1c5474] pl-[6px] text-[9px] leading-[10px] text-[#12a84a]">
        <span>+.61</span>
        <span>+1.41%</span>
      </span>
      <span className="flex w-[46px] flex-col justify-center whitespace-nowrap border-r border-[#1c5474] pl-[6px] text-[9px] leading-[10px] text-[#c5cdd3]">
        <span>B: 42.10</span>
        <span>A: 46.12</span>
      </span>
      <nav className="ml-auto flex pr-px text-[#c9d2d8]">
        {tools.map(({ name, text, Icon, bold, corner, width }) => (
          <button
            key={name}
            type="button"
            aria-label={name}
            className={`relative flex items-center justify-center gap-[6px] border-l border-[#1c5474] ${width} ${bold ? "font-bold" : ""}`}
          >
            {Icon && <Icon />}
            {text}
            {corner && <Corner />}
          </button>
        ))}
      </nav>
    </header>
  );
}

const sideTabs = [
  ["Trade", "h-12"], ["Times And Sales", "h-[102px]"], ["Active Trader", "h-[86px]"], ["Big Buttons", "h-[79px]"],
  ["Chart", "h-[47px]"], ["Phase Scores", "h-[86px]"], ["Dashboard", "h-[76px]"], ["Level II", "h-[55px]"], ["Live News", "h-[71px]"],
];

function SideTabs() {
  return (
    <aside className="mr-px flex w-[22px] shrink-0 flex-col border-x border-[#606060] bg-[#484848]">
      {sideTabs.map(([name, height]) => (
        <button
          key={name}
          type="button"
          className={`flex items-center justify-center border-b border-[#686868] pt-1 text-[11px] text-[#cfcfcf] ${height} ${name === "Chart" ? "bg-[#6b6b6b]" : ""}`}
        >
          <span className="rotate-180 whitespace-nowrap leading-[20px] [writing-mode:vertical-rl]">{name}</span>
        </button>
      ))}
    </aside>
  );
}

function BottomBar() {
  return (
    <footer className="flex h-5 items-center bg-white">
      <div className="flex h-[13px] flex-1 bg-[#191919]">
        <button type="button" aria-label="Scroll left" className="flex w-[10px] items-center justify-center">
          <svg width="4" height="6" viewBox="0 0 4 6" aria-hidden="true"><path d="M4 0v6L0 3z" fill="#7a7a7a" /></svg>
        </button>
        <div className="flex-[832]" />
        <div className="flex flex-[804] items-center justify-center gap-px bg-[#404040]">
          <i className="h-[5px] w-px bg-[#777777]" />
          <i className="h-[5px] w-px bg-[#777777]" />
          <i className="h-[5px] w-px bg-[#777777]" />
        </div>
        <button type="button" aria-label="Step left" className="flex w-[13px] items-center justify-center">
          <svg width="4" height="6" viewBox="0 0 4 6" aria-hidden="true"><path d="M4 0v6L0 3z" fill="#8a8a8a" /></svg>
        </button>
        <button type="button" aria-label="Step right" className="flex w-[13px] items-center justify-center">
          <svg width="4" height="6" viewBox="0 0 4 6" aria-hidden="true"><path d="M0 0v6l4-3z" fill="#8a8a8a" /></svg>
        </button>
      </div>
      <div className="relative flex w-[224px] items-center gap-[5px] pl-[3px] text-[11px] text-[#dddddd]">
        <button type="button" aria-label="Fit width"><ExpandIcon /></button>
        <button type="button" aria-label="Crosshair"><CrosshairIcon /></button>
        <button type="button" aria-label="Zoom in"><ZoomIcon plus /></button>
        <button type="button" aria-label="Zoom out"><ZoomIcon /></button>
        <button type="button" aria-label="Draw line"><SlashIcon color="#dddddd" /></button>
        <button type="button" className="ml-1 whitespace-nowrap">Drawing set: Default</button>
        <Corner color="#dddddd" />
      </div>
    </footer>
  );
}

/* ---------- page ---------- */

const grey = "text-[#8a8a8a]";
const cyan = "text-[#00dcdc]";
const blue = "text-[#66a6d2]";
const pink = "text-[#e060e0]";

export default function App() {
  return (
    <div className="bg-[#003b5a] pb-px font-['Open_Sans',sans-serif]">
      <Toolbar />
      <div className="flex">
        <div className="ml-px min-w-0 flex-1 bg-[#0a0a0a]">
          <main className="pl-[2px]">
            <Panel
              cells={[
                ["IRMD 4 Y 1D [NASDAQ]", "font-bold text-white"],
                ["D: 9/27/23", grey], ["O: 43.5", grey], ["H: 44.72", grey], ["L: 42.88", grey], ["C: 43.94", grey], ["R: 1.84", grey],
                ["MovAvgExponential (CLOSE, 21, 0, no)", pink], ["45.36", pink],
                ["MovAvgExponential (CLOSE, 10, 0, no)", cyan], ["44.42", cyan],
                ["MovAvgExponential (CLOSE, 50, 0, no)", blue], ["46.13", blue],
              ]}
              axis={
                <Axis
                  top={24}
                  height={273}
                  sizeClass="h-[273px]"
                  clip={[24, 297]}
                  labels={[[50, "60"], [84, "55"], [118, "50"], [152, "45"], [185, "40"], [219, "35"], [253, "30"], [287, "25"]]}
                  badges={[{ y: 151, width: 33, text: "43.94", fill: "#00c832", edge: "#5fe07f", ink: "#ffffff" }]}
                >
                  <path d="M1842 27.500h16M1842 41h16" stroke="#e6e6e6" strokeWidth="2" />
                  <path d="M1843 34C1843 40 1848 40 1850 34.500S1855 28.500 1857 32" fill="none" stroke="#e6e6e6" strokeWidth="1.300" />
                </Axis>
              }
            >
              <PricePlot />
            </Panel>
            <Splitter />
            <Panel
              cells={[["Volume", "text-[#d0d0d0]"], ["22,558", grey]]}
              axis={
                <Axis
                  top={300}
                  height={96}
                  sizeClass="h-24"
                  clip={[321, 395]}
                  labels={[[321, "600"], [346, "400"], [371, "200"], [396, "0"]]}
                  unit={[358, "<thousands>"]}
                />
              }
            >
              <VolumePlot />
            </Panel>
            <Splitter />
            <Panel
              cells={[
                ["MACD (10, 24, 6, EXPONENTIAL, no)", cyan], ["-1.11115", cyan], ["-0.967832", "text-[#d8cc92]"],
                ["-0.143316", "text-[#780000]"], ["0", pink],
              ]}
              axis={
                <Axis
                  top={399}
                  height={240}
                  sizeClass="h-60"
                  clip={[420, 638]}
                  labels={[[428, "3"], [456, "2"], [484, "1"], [568, "-2"], [596, "-3"], [624, "-4"]]}
                  badges={[
                    { y: 508, width: 43, text: "-0.1433", fill: "#7d0000", edge: "#b86060", ink: "#ffffff" },
                    { y: 535, width: 43, text: "-1.1111", fill: "#00ffff", edge: "#00ffff", ink: "#005f6e" },
                  ]}
                />
              }
            >
              <MacdPlot />
            </Panel>
            <Splitter />
            <Panel
              cells={[["RelativeStrength (SPX)", "text-[#00b02d]"], ["0.0102795", "text-[#00b02d]"]]}
              axis={
                <Axis
                  top={642}
                  height={197}
                  sizeClass="h-[197px]"
                  clip={[663, 838]}
                  labels={[[693, "11"], [726, "10"], [759, "9"], [793, "8"], [826, "7"]]}
                  unit={[751, "<thousandths>"]}
                  badges={[{ y: 709, width: 45, text: "10.2795", fill: "#00c832", edge: "#5fe07f", ink: "#ffffff" }]}
                />
              }
            >
              <StrengthPlot />
            </Panel>
            <Splitter />
            <Panel
              cells={[["RelativeVolumeStDev (60, 2.0, no)", "text-[#e87286]"], ["0", "text-[#e87286]"], ["2", "text-[#6e6e6e]"]]}
              axis={
                <Axis
                  top={842}
                  height={108}
                  sizeClass="h-[108px]"
                  clip={[863, 949]}
                  labels={[[879, "6"], [902, "4"], [950, "0"]]}
                  badges={[{ y: 918, width: 13, text: "2", fill: "#757575", edge: "#a0a0a0", ink: "#ffffff" }]}
                />
              }
            >
              <RelativeVolumePlot />
            </Panel>
            <div className="pl-px pr-[61px]">
              <svg viewBox="4 950 1832 17" preserveAspectRatio="none" className="block h-[17px] w-full" aria-label="Months">
                <g fill="#8f8f8f" className="font-['Open_Sans',sans-serif] text-[11px]">
                  {months.map(([x, text]) => (
                    <text key={x} x={x} y="963">{text}</text>
                  ))}
                </g>
              </svg>
            </div>
          </main>
          <BottomBar />
        </div>
        <SideTabs />
      </div>
    </div>
  );
}
